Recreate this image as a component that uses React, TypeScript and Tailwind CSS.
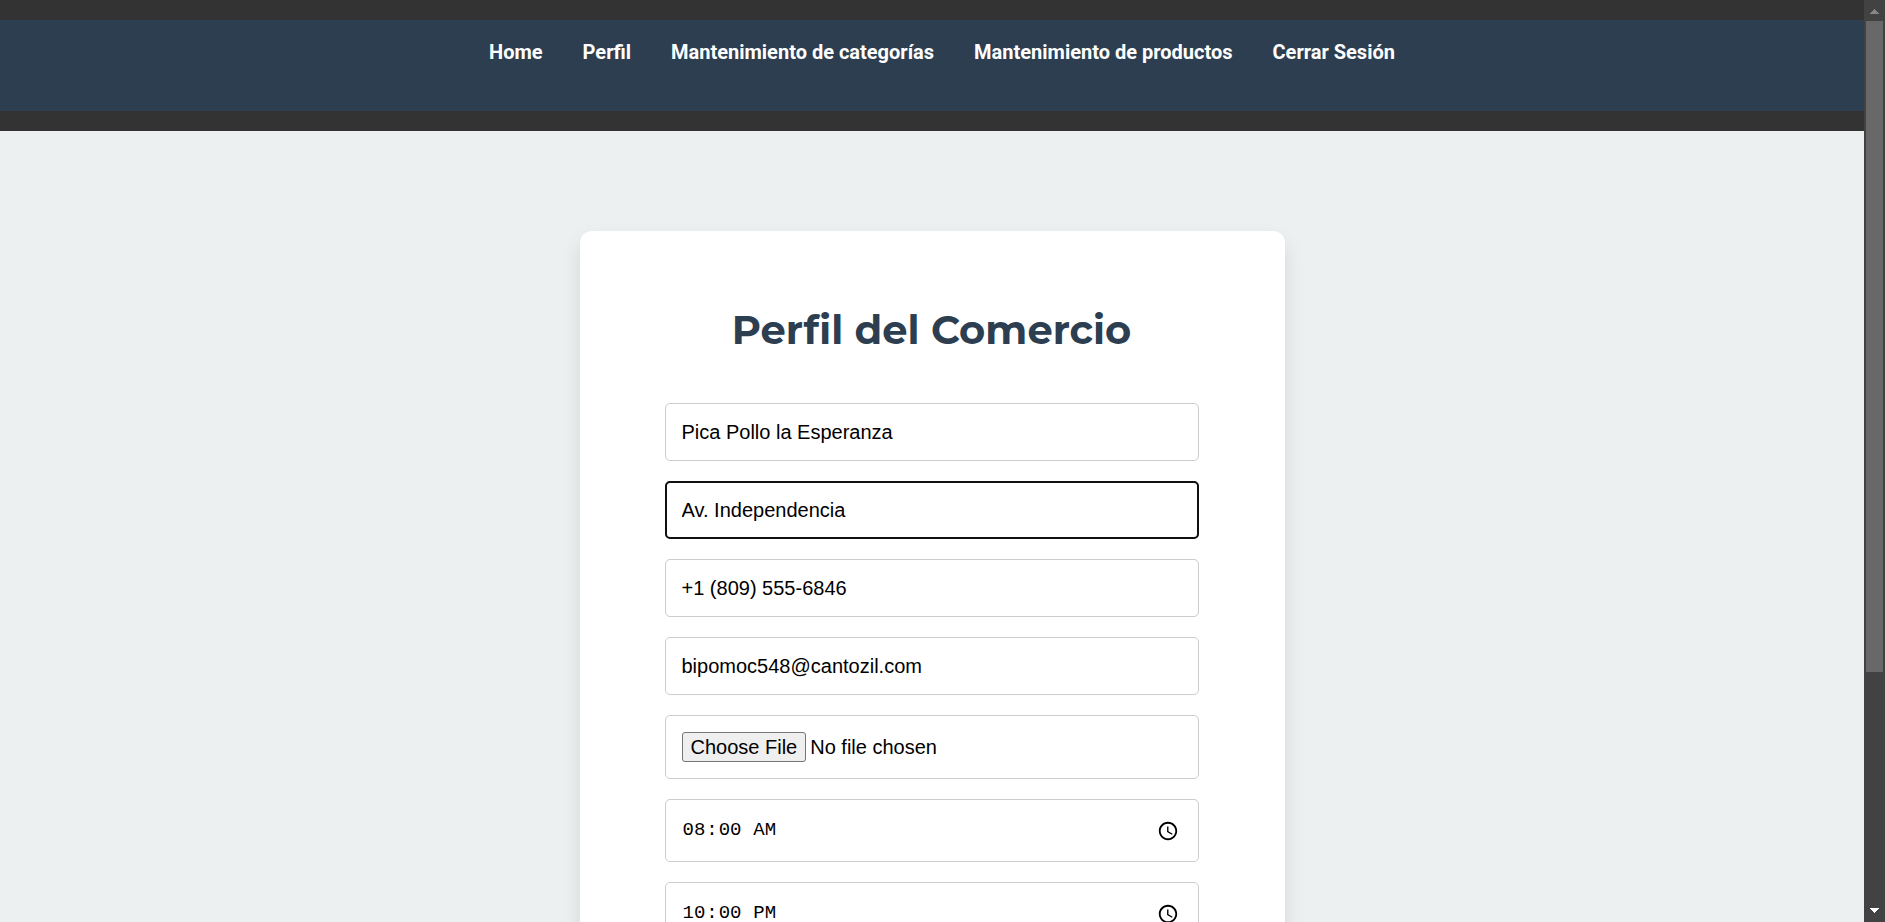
const links = [
  "Home",
  "Perfil",
  "Mantenimiento de categorías",
  "Mantenimiento de productos",
  "Cerrar Sesión",
];

const textFields = [
  { label: "Nombre", type: "text", value: "Pica Pollo la Esperanza", active: false },
  { label: "Dirección", type: "text", value: "Av. Independencia", active: true },
  { label: "Teléfono", type: "tel", value: "+1 (809) 555-6846", active: false },
  { label: "Correo", type: "email", value: "bipomoc548@cantozil.com", active: false },
];

const timeFields = [
  { label: "Hora de apertura", value: "08:00" },
  { label: "Hora de cierre", value: "22:00" },
];

const box = "block w-full rounded-[5px] border border-[#ccc] bg-white px-4 text-black";

function Header() {
  return (
    <header className="bg-[#333] py-5">
      <nav className="bg-[#2c3e50] pt-5 pb-[47px] pl-5">
        <ul className="flex justify-center gap-10 text-xl leading-6 font-bold text-white">
          {links.map((link) => (
            <li key={link}>
              <a href="#">{link}</a>
            </li>
          ))}
        </ul>
      </nav>
    </header>
  );
}

function ProfileForm() {
  return (
    <form className="mx-auto mt-25 mb-25 w-full max-w-[705px] rounded-[12px] bg-white pr-[86px] pl-[85px] pt-[73px] pb-20 shadow-[0_10px_20px_rgba(0,0,0,0.1)]">
      <h1 className="mb-12 text-center font-['Montserrat','Inter',sans-serif] text-[40px] leading-[51px] font-bold text-[#2c3e50]">
        Perfil del Comercio
      </h1>
      <div className="flex flex-col gap-5 font-['Liberation_Sans',Arial,sans-serif]">
        {textFields.map((field) => (
          <input
            key={field.label}
            aria-label={field.label}
            type={field.type}
            defaultValue={field.value}
            className={
              field.active
                ? `${box} h-[58px] text-xl outline-2 -outline-offset-2 outline-[#101010]`
                : `${box} h-[58px] text-xl`
            }
          />
        ))}
        <input
          aria-label="Logo"
          type="file"
          className={`${box} h-16 py-4 text-xl file:mr-1 file:h-[30px] file:rounded-[3px] file:border file:border-solid file:border-[#767676] file:bg-[#efefef] file:px-2 file:text-black`}
        />
        {timeFields.map((field) => (
          <input
            key={field.label}
            aria-label={field.label}
            type="time"
            defaultValue={field.value}
            className={`${box} h-[63px] font-['Liberation_Mono',monospace] text-[19px] [&::-webkit-calendar-picker-indicator]:size-[22px] [&::-webkit-datetime-edit-ampm-field]:ml-1`}
          />
        ))}
      </div>
    </form>
  );
}

function ScrollRail() {
  return (
    <div className="flex w-[21px] shrink-0 flex-col bg-[#424242]" aria-hidden="true">
      <svg className="h-[21px] w-[21px] shrink-0" viewBox="0 0 21 21" shapeRendering="crispEdges">
        <path d="M10.5 9 L15 14 H6 Z" fill="#868686" />
      </svg>
      <div className="flex min-h-0 flex-1 flex-col px-[2px]">
        <div className="h-[74%] bg-[#686868]" />
      </div>
      <svg className="h-[21px] w-[21px] shrink-0" viewBox="0 0 21 21" shapeRendering="crispEdges">
        <path d="M6 7 H15 L10.5 12 Z" fill="#fff" />
      </svg>
    </div>
  );
}

export default function App() {
  return (
    <div className="flex h-screen font-['Roboto',sans-serif]">
      <div className="min-w-0 flex-1 overflow-y-auto bg-[#ecf0f1] [scrollbar-width:none]">
        <Header />
        <main>
          <ProfileForm />
        </main>
      </div>
      <ScrollRail />
    </div>
  );
}
